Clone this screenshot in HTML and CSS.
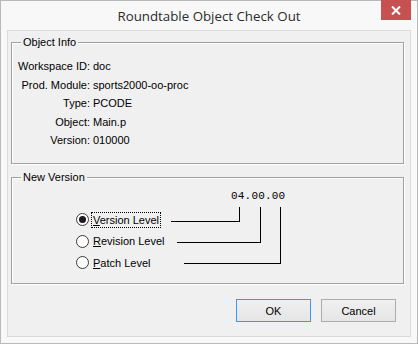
FILE: index.html
```html
<!DOCTYPE html>
<html lang="en">
<head>
    <meta charset="UTF-8">
    <title>Roundtable Object Check Out</title>
    <link rel="stylesheet" href="styles.css">
</head>
<body>
    <div class="window">
        <div class="titlebar">
            <span></span>
            <div class="title">Roundtable Object Check Out</div>
            <div class="close">
                <svg width="10" height="9" viewBox="0 0 10 9">
                    <path d="M1 0.5 L9 8.5 M9 0.5 L1 8.5" stroke="#fff" stroke-width="2"/>
                </svg>
            </div>
        </div>
        <div class="client">
            <div class="group info">
                <span class="legend">Object Info</span>
                <div class="fields">
                    <span class="lbl">Workspace ID:</span><span>doc</span>
                    <span class="lbl">Prod. Module:</span><span>sports2000-oo-proc</span>
                    <span class="lbl">Type:</span><span>PCODE</span>
                    <span class="lbl">Object:</span><span>Main.p</span>
                    <span class="lbl">Version:</span><span>010000</span>
                </div>
            </div>
            <div class="group newver">
                <span class="legend">New Version</span>
                <svg class="connectors" width="391" height="105">
                    <path d="M159 43.5 H227.5 V29 M165 64.5 H248.5 V29 M172 85.5 H268.5 V29" fill="none" stroke="#000" stroke-width="1"/>
                </svg>
                <div class="vernum">04.00.00</div>
                <div class="radios">
                    <label class="radio"><span class="circle checked"></span><span class="text focus"><u>V</u>ersion Level</span></label>
                    <label class="radio"><span class="circle"></span><span class="text"><u>R</u>evision Level</span></label>
                    <label class="radio"><span class="circle"></span><span class="text"><u>P</u>atch Level</span></label>
                </div>
            </div>
            <div class="buttons">
                <button class="btn default">OK</button>
                <button class="btn">Cancel</button>
            </div>
        </div>
    </div>
</body>
</html>
```

FILE: styles.css
```css
body {
    margin: 0;
    font-family: "Liberation Sans", Arial, sans-serif;
    font-size: 11px;
    color: #000;
    background: #fff;
}
.window {
    width: 418px;
    height: 344px;
    box-sizing: border-box;
    border: 1px solid #b9b9b9;
    background-color: #f8f8f8;
}
.titlebar {
    height: 29px;
    display: grid;
    grid-template-columns: 1fr auto 1fr;
    align-items: center;
}
.title {
    font-family: "Open Sans", "Noto Sans", sans-serif;
    font-size: 13.3px;
    color: #2b2b2b;
}
.close {
    justify-self: end;
    align-self: start;
    margin-top: -1px;
    margin-right: 6px;
    width: 30px;
    height: 20px;
    background-color: #c75050;
    display: flex;
    align-items: center;
    justify-content: center;
}
.client {
    margin: 0 6px;
    height: 307px;
    box-sizing: border-box;
    border: 1px solid #dadada;
    background-color: #f0f0f0;
}
.group {
    position: relative;
    box-sizing: border-box;
    border: 1px solid #a0a0a0;
    box-shadow: 1px 1px 0 #fff, inset 1px 1px 0 #fff;
}
.group.info {
    margin: 11px 6px 0 3px;
    height: 122px;
}
.group.newver {
    margin: 13px 6px 0 3px;
    height: 107px;
    padding-top: 11px;
}
.legend {
    position: absolute;
    top: -8px;
    left: 9px;
    padding: 0 2px;
    line-height: 14px;
    background-color: #f0f0f0;
}
.fields {
    display: grid;
    grid-template-columns: 74px auto;
    column-gap: 3px;
    grid-auto-rows: 18.5px;
    line-height: 18.5px;
    padding: 14px 0 0 4px;
}
.lbl {
    text-align: right;
}
.connectors {
    position: absolute;
    top: 0;
    left: 0;
    shape-rendering: crispEdges;
}
.vernum {
    margin-left: 219px;
    font-family: "Liberation Mono", "Courier New", monospace;
    font-size: 11px;
    line-height: 14px;
    letter-spacing: 0.2px;
}
.radios {
    margin-top: 6px;
    padding-left: 64px;
}
.radio {
    display: flex;
    align-items: center;
    height: 21.5px;
}
.circle {
    width: 13px;
    height: 13px;
    box-sizing: border-box;
    border: 1px solid #3c3c3c;
    border-radius: 50%;
    background-color: #fff;
    margin-right: 3px;
    display: flex;
    align-items: center;
    justify-content: center;
}
.circle.checked::after {
    content: "";
    width: 7px;
    height: 7px;
    border-radius: 50%;
    background-color: #1a1a1a;
}
.text {
    line-height: 14px;
    padding: 0 1px;
}
.focus {
    outline: 1px dotted #000;
}
.buttons {
    display: flex;
    justify-content: flex-end;
    gap: 10px;
    margin-top: 15px;
    padding-right: 14px;
}
.btn {
    width: 75px;
    height: 23px;
    font-family: "Liberation Sans", Arial, sans-serif;
    font-size: 11px;
    color: #000;
    background: linear-gradient(#f0f0f0, #e5e5e5);
    border: 1px solid #acacac;
    padding: 0;
}
.btn.default {
    border-color: #3399ff;
}
```
